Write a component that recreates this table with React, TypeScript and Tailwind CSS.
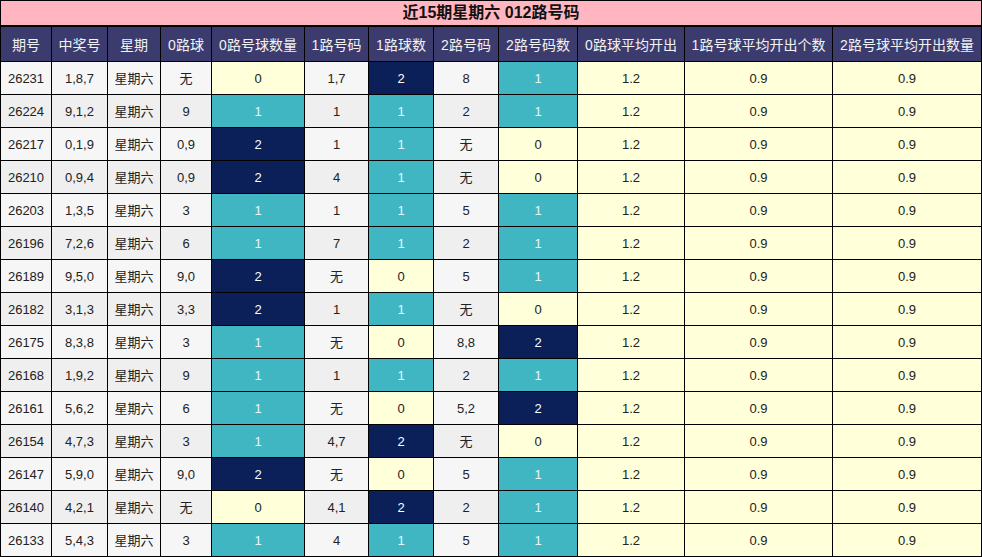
import React from "react";

const cols = [
  "期号",
  "中奖号",
  "星期",
  "0路球",
  "0路号球数量",
  "1路号码",
  "1路球数",
  "2路号码",
  "2路号码数",
  "0路球平均开出",
  "1路号球平均开出个数",
  "2路号球平均开出数量",
];

// 期号, 中奖号, 0路球, 0路数, 1路号码, 1路数, 2路号码, 2路数
const rows: [string, string, string, number, string, number, string, number][] = [
  ["26231", "1,8,7", "无", 0, "1,7", 2, "8", 1],
  ["26224", "9,1,2", "9", 1, "1", 1, "2", 1],
  ["26217", "0,1,9", "0,9", 2, "1", 1, "无", 0],
  ["26210", "0,9,4", "0,9", 2, "4", 1, "无", 0],
  ["26203", "1,3,5", "3", 1, "1", 1, "5", 1],
  ["26196", "7,2,6", "6", 1, "7", 1, "2", 1],
  ["26189", "9,5,0", "9,0", 2, "无", 0, "5", 1],
  ["26182", "3,1,3", "3,3", 2, "1", 1, "无", 0],
  ["26175", "8,3,8", "3", 1, "无", 0, "8,8", 2],
  ["26168", "1,9,2", "9", 1, "1", 1, "2", 1],
  ["26161", "5,6,2", "6", 1, "无", 0, "5,2", 2],
  ["26154", "4,7,3", "3", 1, "4,7", 2, "无", 0],
  ["26147", "5,9,0", "9,0", 2, "无", 0, "5", 1],
  ["26140", "4,2,1", "无", 0, "4,1", 2, "2", 1],
  ["26133", "5,4,3", "3", 1, "4", 1, "5", 1],
];

const countCls = (n: number) =>
  n === 0
    ? "bg-[#ffffd9] text-[#222]"
    : n === 1
    ? "bg-[#40b6c3] text-[#e8f6f8]"
    : "bg-[#0b1f59] text-white";

const Cell = ({ cls, children }: { cls: string; children: React.ReactNode }) => (
  <div className={`flex items-center justify-center pt-px text-[13px] ${cls}`}>{children}</div>
);

export default function App() {
  return (
    <div
      className="w-[982px] h-[557px] bg-black p-px grid gap-px grid-cols-[50px_55px_52px_50px_92px_63px_64px_64px_78px_106px_147px_148px] grid-rows-[25px_34px_repeat(15,32px)] overflow-hidden"
      style={{ fontFamily: '"Liberation Sans", "Noto Sans CJK SC", sans-serif' }}
    >
      <div className="col-span-12 bg-[#ffb6c1] flex items-center justify-center text-[16px] font-bold text-[#111] mb-px">
        近15期星期六 012路号码
      </div>
      {cols.map((c) => (
        <div
          key={c}
          className="bg-[#3c3b6e] text-[#f2f2f2] text-[14px] flex items-center justify-center pt-[2px] whitespace-nowrap"
        >
          {c}
        </div>
      ))}
      {rows.map((r, i) => {
        const grey = i % 2 === 0 ? "bg-[#f6f6f6] text-[#222]" : "bg-[#efefef] text-[#222]";
        return (
          <React.Fragment key={r[0]}>
            <Cell cls={grey}>{r[0]}</Cell>
            <Cell cls={grey}>{r[1]}</Cell>
            <Cell cls={grey}>星期六</Cell>
            <Cell cls={grey}>{r[2]}</Cell>
            <Cell cls={countCls(r[3])}>{r[3]}</Cell>
            <Cell cls={grey}>{r[4]}</Cell>
            <Cell cls={countCls(r[5])}>{r[5]}</Cell>
            <Cell cls={grey}>{r[6]}</Cell>
            <Cell cls={countCls(r[7])}>{r[7]}</Cell>
            <Cell cls="bg-[#ffffd9] text-[#222]">1.2</Cell>
            <Cell cls="bg-[#ffffd9] text-[#222]">0.9</Cell>
            <Cell cls="bg-[#ffffd9] text-[#222]">0.9</Cell>
          </React.Fragment>
        );
      })}
    </div>
  );
}
